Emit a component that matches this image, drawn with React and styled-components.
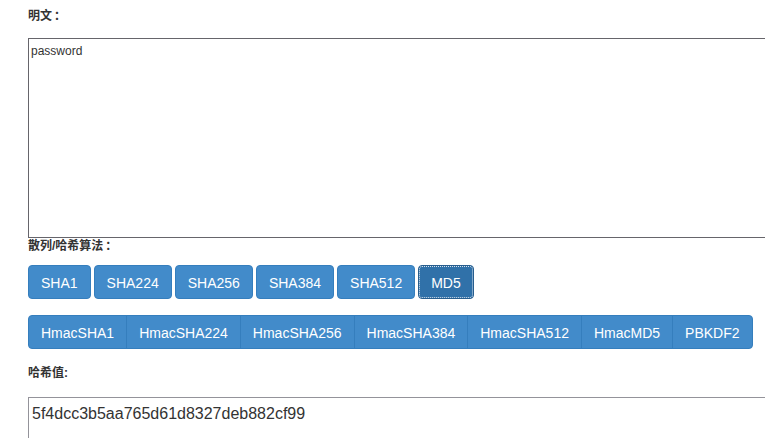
import React from 'react';
import styled, { createGlobalStyle } from 'styled-components';

const GlobalStyle = createGlobalStyle`
  html, body {
    margin: 0;
    padding: 0;
    background: #fff;
    overflow: hidden;
  }
  body {
    font-family: "Liberation Sans", "Noto Sans CJK SC", sans-serif;
    color: #333;
  }
`;

const Page = styled.div`
  width: 800px;
  padding: 8px 0 0 28px;
`;

const Label = styled.div`
  font-size: 12px;
  font-weight: bold;
  line-height: 17px;
  height: 17px;
  color: #333;
  margin-bottom: ${(p) => p.$gap || 0}px;
`;

const Colon = styled.span`
  margin-left: 2px;
`;

const PlainText = styled.textarea`
  display: block;
  box-sizing: border-box;
  width: 780px;
  height: 200px;
  margin: 0;
  padding: 4px 2px;
  border: 1px solid #66656b;
  font-family: "Liberation Sans", sans-serif;
  font-size: 12px;
  line-height: 17px;
  color: #333;
  resize: none;
  outline: none;
`;

const ButtonRow = styled.div`
  display: flex;
  gap: 3px;
  margin-bottom: 16px;
`;

const ButtonGroup = styled.div`
  display: flex;
  margin-bottom: 16px;
  width: max-content;
`;

const Btn = styled.button`
  box-sizing: border-box;
  height: 34px;
  padding: 7px 12px 5px;
  font-family: "Liberation Sans", sans-serif;
  font-size: 14px;
  line-height: 20px;
  color: #fff;
  background: ${(p) => (p.$active ? '#3071a9' : '#428bca')};
  border: 1px solid ${(p) => (p.$active ? '#285e8e' : '#357ebd')};
  border-radius: 4px;
  outline: ${(p) => (p.$active ? '1px dotted #d8e2ec' : 'none')};
  outline-offset: -2px;
  cursor: pointer;
`;

const GroupBtn = styled(Btn)`
  border-radius: 0;
  margin-left: -1px;
  &:first-child {
    margin-left: 0;
    border-radius: 4px 0 0 4px;
  }
  &:last-child {
    border-radius: 0 4px 4px 0;
  }
`;

const HashOut = styled.div`
  box-sizing: border-box;
  width: 780px;
  height: 60px;
  border: 1px solid #94939a;
  padding: 6px 3px;
  font-size: 16px;
  line-height: 20px;
  color: #333;
`;

const hashes = ['SHA1', 'SHA224', 'SHA256', 'SHA384', 'SHA512', 'MD5'];
const hmacs = ['HmacSHA1', 'HmacSHA224', 'HmacSHA256', 'HmacSHA384', 'HmacSHA512', 'HmacMD5', 'PBKDF2'];

export default function App() {
  return (
    <Page>
      <GlobalStyle />
      <Label $gap={13}>明文<Colon>：</Colon></Label>
      <PlainText defaultValue="password" />
      <Label $gap={10}>散列/哈希算法<Colon>：</Colon></Label>
      <ButtonRow>
        {hashes.map((h) => (
          <Btn key={h} $active={h === 'MD5'}>{h}</Btn>
        ))}
      </ButtonRow>
      <ButtonGroup>
        {hmacs.map((h) => (
          <GroupBtn key={h}>{h}</GroupBtn>
        ))}
      </ButtonGroup>
      <Label $gap={15}>哈希值:</Label>
      <HashOut>5f4dcc3b5aa765d61d8327deb882cf99</HashOut>
    </Page>
  );
}
